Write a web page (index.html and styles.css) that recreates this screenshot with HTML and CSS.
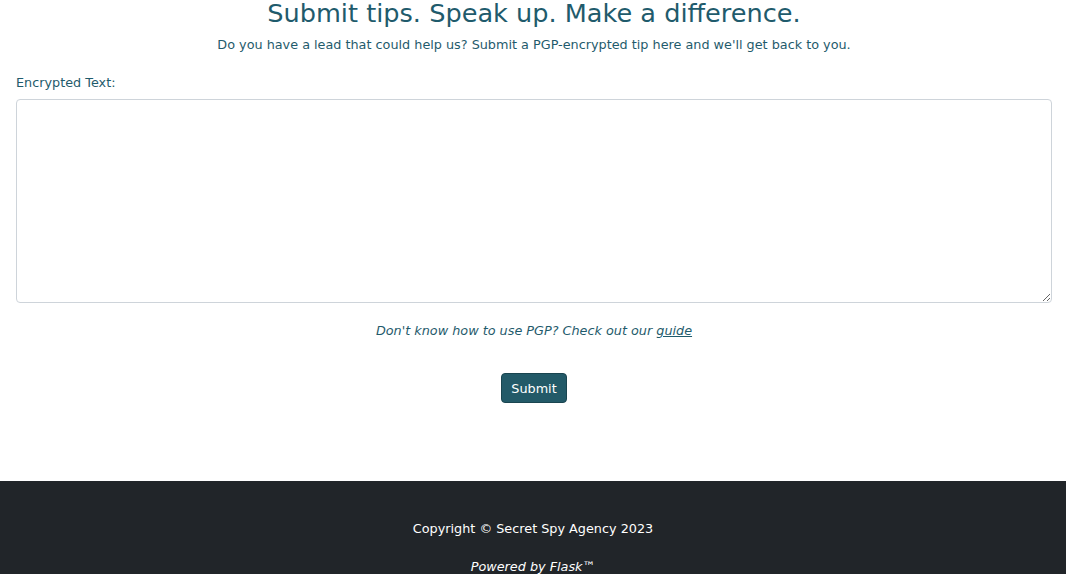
FILE: index.html
```html
<!DOCTYPE html>
<html>
<head>
<meta charset="utf-8">
<title>Submit tips</title>
<link rel="stylesheet" href="styles.css">
</head>
<body>
<main class="content">
  <h1 class="title">Submit tips. Speak up. Make a difference.</h1>
  <p class="lead">Do you have a lead that could help us? Submit a PGP-encrypted tip here and we'll get back to you.</p>
  <form class="tip-form">
    <label class="label" for="tip">Encrypted Text:</label>
    <textarea id="tip" class="tip-input"></textarea>
    <p class="hint">Don't know how to use PGP? Check out our <a href="#" class="hint-link">guide</a></p>
    <div class="actions"><button type="button" class="btn">Submit</button></div>
  </form>
</main>
<footer class="footer">
  <p class="copyright">Copyright © Secret Spy Agency 2023</p>
  <p class="powered">Powered by Flask™</p>
</footer>
</body>
</html>
```

FILE: styles.css
```css
* { box-sizing: border-box; }
html, body { margin: 0; padding: 0; }
body {
  font-family: "DejaVu Sans", sans-serif;
  color: #1f5b6c;
  background: #fff;
  font-size: 12.8px;
}
.content {
  padding: 0 14px 0 16px;
  height: 481px;
}
.title {
  margin: 0;
  padding-top: 0;
  text-align: center;
  font-weight: 400;
  font-size: 25.6px;
  line-height: 26px;
}
.lead {
  margin: 10px 0 0;
  text-align: center;
  font-size: 12.8px;
  line-height: 18px;
}
.tip-form { margin-top: 20px; }
.label {
  display: block;
  font-size: 12.8px;
  line-height: 18px;
  margin-bottom: 7px;
}
.tip-input {
  display: block;
  width: 100%;
  height: 204px;
  border: 1px solid #ced4da;
  border-radius: 4px;
  resize: vertical;
  font-family: inherit;
}
.hint {
  margin: 19px 0 0;
  text-align: center;
  font-style: italic;
  font-size: 12.8px;
  line-height: 18px;
}
.hint-link { color: #1f5b6c; }
.actions {
  display: flex;
  justify-content: center;
  margin-top: 33px;
}
.btn {
  background: #235a68;
  color: #fff;
  border: 1px solid #1a4550;
  border-radius: 4px;
  font-family: inherit;
  font-size: 12.8px;
  height: 30px;
  padding: 0 9px;
}
.footer {
  background: #212529;
  color: #fff;
  text-align: center;
  height: 93px;
  padding-top: 39px;
  font-size: 12.8px;
}
.copyright { margin: 0; line-height: 18px; }
.powered { margin: 20px 0 0; font-style: italic; line-height: 18px; }
```
